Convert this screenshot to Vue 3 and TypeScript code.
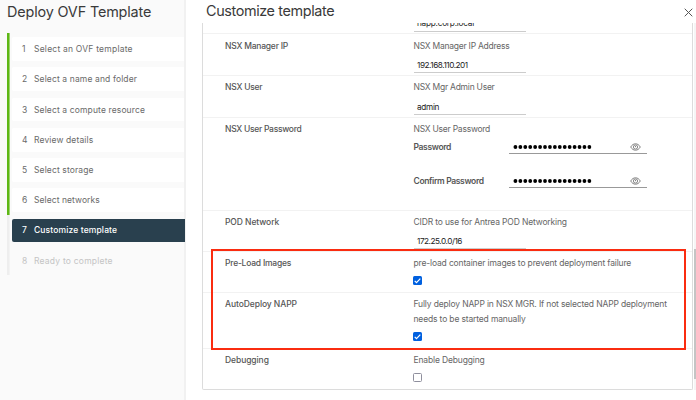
<script setup lang="ts">
import { ref } from 'vue'

interface Step {
  label: string
  state: 'done' | 'active' | 'pending'
  track: string
}

interface Property {
  id: string
  label: string
  lines: string[]
  kind: 'text' | 'password' | 'check'
  value?: string
  checked?: boolean
}

const steps: Step[] = [
  { label: 'Select an OVF template', state: 'done', track: 'wide' },
  { label: 'Select a name and folder', state: 'done', track: 'normal' },
  { label: 'Select a compute resource', state: 'done', track: 'normal' },
  { label: 'Review details', state: 'done', track: 'normal' },
  { label: 'Select storage', state: 'done', track: 'normal' },
  { label: 'Select networks', state: 'done', track: 'snug' },
  { label: 'Customize template', state: 'active', track: 'normal' },
  { label: 'Ready to complete', state: 'pending', track: 'wide' },
]

const properties = ref<Property[]>([
  { id: 'manager-ip', label: 'NSX Manager IP', lines: ['NSX Manager IP Address'], kind: 'text', value: '192.168.110.201' },
  { id: 'user', label: 'NSX User', lines: ['NSX Mgr Admin User'], kind: 'text', value: 'admin' },
  { id: 'password', label: 'NSX User Password', lines: ['NSX User Password'], kind: 'password' },
  { id: 'pod', label: 'POD Network', lines: ['CIDR to use for Antrea POD Networking'], kind: 'text', value: '172.25.0.0/16' },
  { id: 'preload', label: 'Pre-Load Images', lines: ['pre-load container images to prevent deployment failure'], kind: 'check', checked: true },
  { id: 'autodeploy', label: 'AutoDeploy NAPP', lines: ['Fully deploy NAPP in NSX MGR. If not selected NAPP deployment', 'needs to be started manually'], kind: 'check', checked: true },
  { id: 'debug', label: 'Debugging', lines: ['Enable Debugging'], kind: 'check', checked: false },
])

const secrets = ['Password', 'Confirm Password']
</script>

<template>
  <div class="wizard">
    <aside class="side">
      <h1>Deploy OVF Template</h1>
      <ol class="steps">
        <li v-for="(s, i) in steps" :key="s.label" :class="['step', s.state]">
          <span class="num">{{ i + 1 }}</span>
          <span :class="['name', s.track]">{{ s.label }}</span>
        </li>
      </ol>
    </aside>

    <main class="main">
      <header class="head">
        <h2>Customize template</h2>
        <svg class="close" viewBox="0 0 9 9"><path d="M.7.7l7.6 7.6M8.3.7L.7 8.3" /></svg>
      </header>

      <div class="scroll">
        <section class="table">
          <div class="row cut">
            <div class="body"><div class="input"><span>napp.corp.local</span></div></div>
          </div>
          <div v-for="p in properties" :key="p.id" :class="['row', p.id]">
            <div class="label"><span>{{ p.label }}</span></div>
            <div class="body">
              <p v-for="(l, n) in p.lines" :key="n" class="desc">{{ l }}</p>
              <div v-if="p.kind === 'text'" class="input"><span>{{ p.value }}</span></div>
              <template v-else-if="p.kind === 'password'">
                <div v-for="(s, n) in secrets" :key="s" :class="['secret', 's' + n]">
                  <span class="secret-label">{{ s }}</span>
                  <div class="field">
                    <svg class="dots" viewBox="0 0 80 6">
                      <circle v-for="d in 16" :key="d" :cx="d * 4.93 - 2.5" cy="3" r="1.9" />
                    </svg>
                    <svg class="eye" viewBox="0 0 11 8">
                      <path d="M.7 4C2 1.8 3.6.8 5.5.8S9 1.8 10.3 4C9 6.2 7.4 7.2 5.5 7.2S2 6.2.7 4z" />
                      <circle cx="5.5" cy="4" r="2.1" />
                      <path d="M5.5 2.9v1.3" />
                    </svg>
                  </div>
                </div>
              </template>
              <button v-else type="button" :class="['check', { on: p.checked }]" @click="p.checked = !p.checked">
                <svg v-if="p.checked" viewBox="0 0 9 9"><path d="M1.7 4.8l1.8 1.8 3.8-4" /></svg>
              </button>
            </div>
          </div>
        </section>
        <div class="bar"><div class="thumb"></div></div>
      </div>
    </main>
    <div class="highlight"></div>
  </div>
</template>

<style>
body { margin: 0; overflow: hidden; background: #fff; }
</style>

<style scoped>
* { box-sizing: border-box; }
.wizard {
  position: relative;
  display: flex;
  width: 696px;
  height: 400px;
  overflow: hidden;
  font-family: Inter, "Liberation Sans", sans-serif;
  font-size: 8.5px;
  color: #565656;
}
h1, h2, p, ol { margin: 0; padding: 0; font-weight: 400; }
h1, h2 { font-size: 14.4px; line-height: 20px; color: #3a3a3a; white-space: nowrap; }
h1 { letter-spacing: -0.15px; }
h2 { letter-spacing: -0.38px; }
.side {
  width: 186px;
  flex: none;
  padding: 2px 0 0 7px;
  background: #fafafa;
  border-right: 2px solid #f1f1f1;
}
.steps {
  list-style: none;
  margin-top: 11px;
  height: 242px;
  padding: 4.2px 0 0 5px;
  background: linear-gradient(#5eb715 0 182px, #eee 182px) no-repeat 0 0 / 2.6px 100%;
}
.step {
  display: flex;
  align-items: center;
  height: 23.7px;
  margin-bottom: 6.55px;
  padding-left: 10px;
  background: #fff;
  border-radius: 2px 0 0 2px;
  color: #6a6a6a;
  white-space: nowrap;
}
.num { width: 12px; }
.name.wide { letter-spacing: 0.22px; }
.name.normal { letter-spacing: 0.13px; }
.name.snug { letter-spacing: 0.07px; }
.step.active { background: #29404e; color: #fff; font-weight: 500; width: 173px; }
.step.pending { background: none; color: #c4c4c4; }
.main { flex: 1; min-width: 0; display: flex; flex-direction: column; }
.head {
  display: flex;
  justify-content: space-between;
  height: 23px;
  flex: none;
  padding: 1px 3px 0 20px;
}
.close { width: 9px; height: 9px; margin-top: 6.5px; fill: none; stroke: #555; stroke-width: 1; }
.scroll { display: flex; justify-content: space-between; height: 366.5px; padding-left: 16px; }
.table {
  width: 491px;
  border: 1px solid #dcdcdc;
  border-top: 0;
  border-radius: 0 0 2px 2px;
}
.bar { width: 2px; background: #f5f5f5; }
.thumb { width: 2px; height: 130px; margin-top: 226px; background: #c4c4c4; }
.row {
  display: flex;
  height: 42px;
  border-top: 1px solid #f2f2f2;
  padding-left: 22px;
  overflow: hidden;
  white-space: nowrap;
}
.row.cut { height: 10px; border: 0; padding-left: 210.5px; align-items: flex-end; }
.row.password { height: 92.5px; }
.row.pod { height: 41.5px; }
.row.preload { height: 41px; }
.row.autodeploy { height: 55.5px; }
.row.debug { height: 41px; }
.label {
  width: 188.5px;
  line-height: 15px;
  padding-top: 4px;
  font-weight: 500;
  letter-spacing: -0.22px;
}
.pod .label, .autodeploy .label, .debug .label { letter-spacing: -0.08px; }
.password .label { letter-spacing: -0.28px; }
.body { padding-top: 4px; flex: 1; }
.manager-ip .label, .manager-ip .body { padding-top: 4.6px; }
.desc { line-height: 15px; color: #666; letter-spacing: -0.15px; }
.manager-ip .desc, .user .desc, .password .desc { letter-spacing: -0.24px; }
.input {
  width: 112.5px;
  height: 19.6px;
  padding: 5.5px 0 0 3.5px;
  border-bottom: 1.5px solid #ccc;
  line-height: 13px;
  font-size: 8.2px;
  letter-spacing: -0.45px;
  color: #222;
}
.user .input { letter-spacing: -0.3px; height: 20.2px; padding-top: 6.1px; }
.cut .input { margin-bottom: 1px; padding-top: 4.6px; letter-spacing: -0.22px; }
.secret { display: flex; height: 18px; }
.secret.s0 { margin-bottom: 16px; }
.secret-label { width: 95px; line-height: 20px; font-weight: 600; letter-spacing: -0.35px; }
.field {
  display: flex;
  justify-content: space-between;
  align-items: center;
  width: 138.5px;
  height: 17px;
  padding: 3px 6px 0 4px;
  border-bottom: 1px solid #999;
}
.dots { width: 80px; height: 6px; fill: #000; }
.eye { width: 11px; height: 8px; fill: none; stroke: #777; stroke-width: 0.9; }
.check {
  display: block;
  width: 9px;
  height: 9px;
  margin: 5px 0 0 -0.5px;
  padding: 0;
  border: 1px solid #8f8f9d;
  border-radius: 1.5px;
  background: #fff;
}
.check.on { border: 0; background: #0060df; }
.check svg { display: block; width: 100%; height: 100%; fill: none; stroke: #fff; stroke-width: 1.2; }
.highlight {
  position: absolute;
  left: 211px;
  top: 249px;
  width: 475px;
  height: 101px;
  border: 2px solid #fa2c10;
}
</style>
